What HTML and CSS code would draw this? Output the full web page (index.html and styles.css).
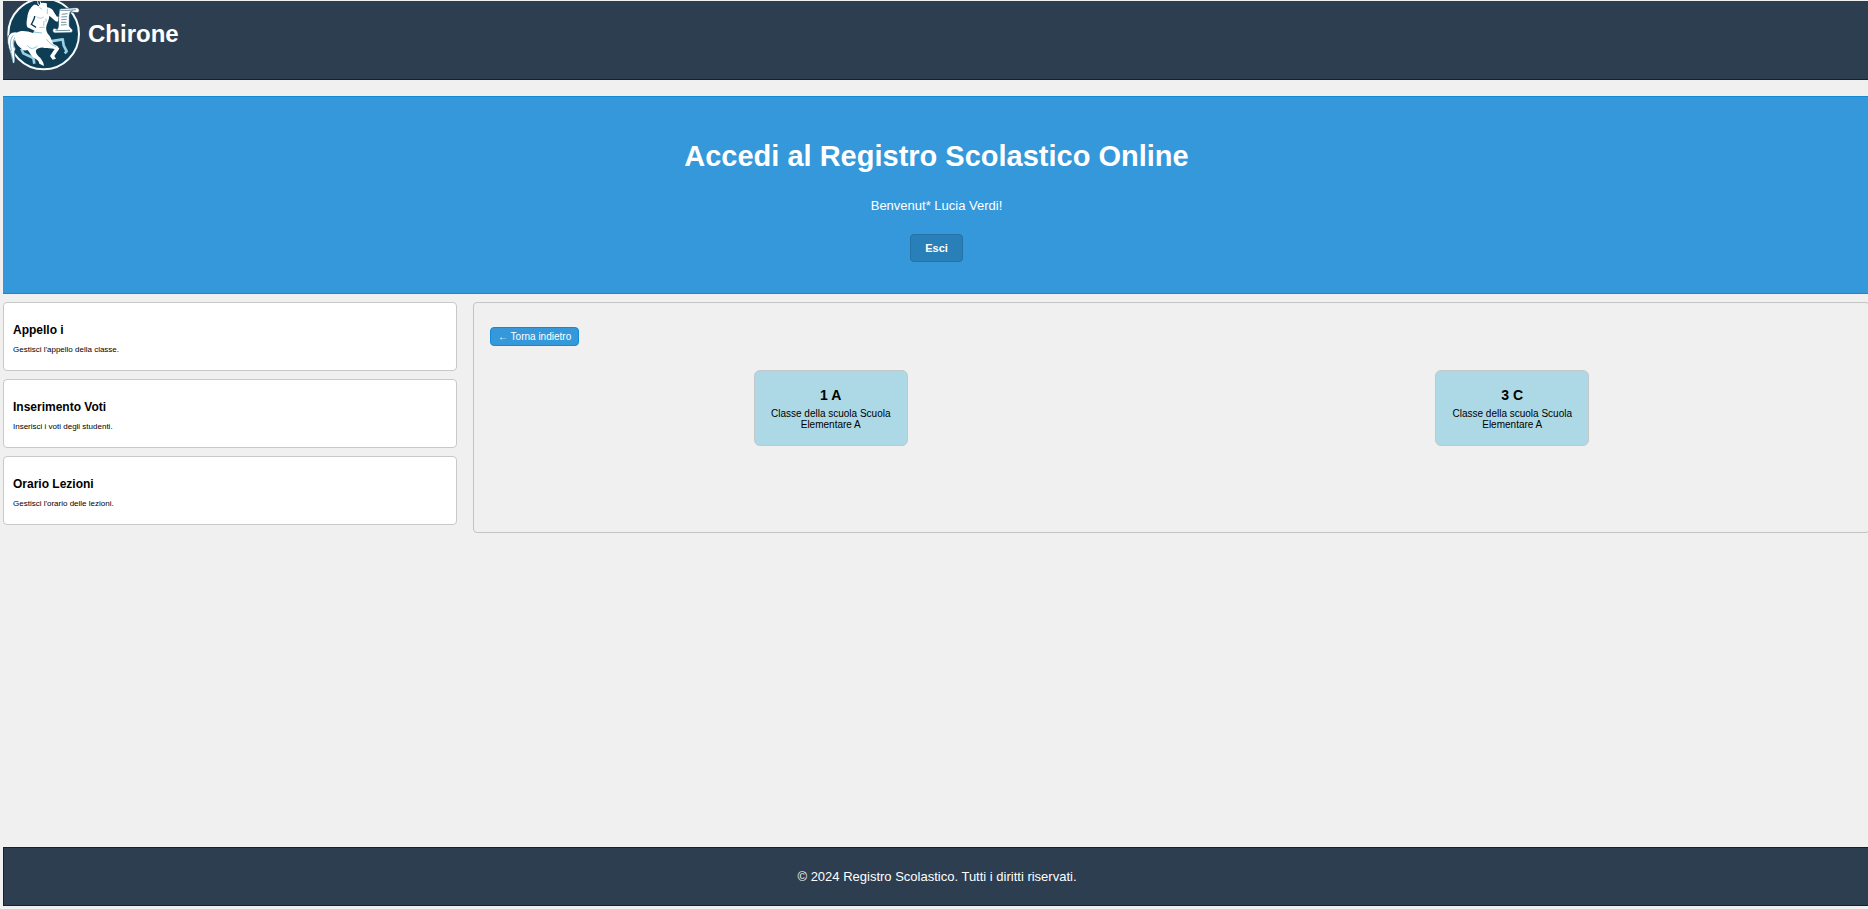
FILE: index.html
```html
<!DOCTYPE html>
<html lang="it">
<head>
<meta charset="utf-8">
<title>Chirone - Registro Scolastico</title>
<link rel="stylesheet" href="styles.css">
</head>
<body>
<header class="topbar">
  <svg class="logo" viewBox="9 3 240 213" role="img" aria-label="Chirone">
    <circle cx="131" cy="102" r="106" fill="#0d3e56" stroke="#f4fbfd" stroke-width="6"/>
    <path d="M56 98C36 90 20 104 23 128C26 148 34 164 38 190L44 189C47 170 40 160 47 146C38 132 42 116 58 112Z" fill="#fff" stroke="#0d3e56" stroke-width="2"/>
    <path d="M40 106C30 118 29 134 35 152M31 150L39 184M47 110C38 120 38 132 43 146" fill="none" stroke="#4f94b3" stroke-width="2"/>
    <path d="M64 146L70 160L100 174L103 191" fill="none" stroke="#9bd0e3" stroke-width="8" stroke-linejoin="round"/>
    <path d="M150 124L188 118L191 136L200 154L194 160" fill="none" stroke="#9bd0e3" stroke-width="8" stroke-linejoin="round"/>
    <path d="M102 14C90 24 84 34 82 52C80 64 78 74 82 82L104 92L99 99C82 93 61 89 50 99C40 110 45 131 61 143C67 149 74 154 82 150C88 154 90 164 98 171C109 178 117 181 118 191L132 198L130 188L122 175C113 168 106 158 108 151C112 145 122 142 130 143C142 146 152 143 164 147L150 168L158 179L168 176L163 168L178 146L172 138L160 132C156 124 154 116 149 108C139 98 136 88 140 75C145 62 148 54 148 47L166 63C172 67 178 64 181 57L184 48L171 50L162 37C158 27 151 23 141 22L140 7L132 3L119 5L114 14Z" fill="#fff"/>
    <path d="M108 3C106 11 109 17 116 19L121 10L127 8L141 10L145 3Z" fill="#0d3e56"/>
    <path d="M113 4C113 10 115 14 119 17M120 4L124 14" fill="none" stroke="#fff" stroke-width="3"/>
    <path d="M104 48C105 56 98 65 94 73L108 82" fill="none" stroke="#0d3e56" stroke-width="4"/>
    <path d="M110 50C118 56 124 56 131 50M132 63L131 78M118 82L134 82M138 56L138 66M118 22L126 28M142 26L142 42" fill="none" stroke="#6fb0cb" stroke-width="2"/>
    <path d="M100 96L126 99M82 136C92 150 102 146 112 138M140 118C148 130 156 134 168 140" fill="none" stroke="#8cc6dc" stroke-width="3"/>
    <path d="M178 29C182 24 192 26 214 24L229 23C239 23 241 36 232 38L211 36L208 49L208 78L214 86C221 88 218 99 210 98L165 99C156 98 156 86 164 85L172 88L175 80L176 52Z" fill="#fff" stroke="#0d3e56" stroke-width="2"/>
    <path d="M185 43L203 41M184 51L201 50M184 59L200 58M183 67L199 67M183 75L200 74M181 31L204 31L228 29M166 92L210 91M209 38L218 31" fill="none" stroke="#2b5b72" stroke-width="2"/>
  </svg>
  <span class="brand">Chirone</span>
</header>
<section class="hero">
  <h1>Accedi al Registro Scolastico Online</h1>
  <p>Benvenut* Lucia Verdi!</p>
  <button type="button" class="logout">Esci</button>
</section>
<main class="content">
  <nav class="menu">
    <article class="card"><h2>Appello i</h2><p>Gestisci l'appello della classe.</p></article>
    <article class="card"><h2>Inserimento Voti</h2><p>Inserisci i voti degli studenti.</p></article>
    <article class="card"><h2>Orario Lezioni</h2><p>Gestisci l'orario delle lezioni.</p></article>
  </nav>
  <section class="panel">
    <button type="button" class="back">← Torna indietro</button>
    <div class="classes">
      <article class="class-card"><h2>1 A</h2><p>Classe della scuola Scuola Elementare A</p></article>
      <article class="class-card"><h2>3 C</h2><p>Classe della scuola Scuola Elementare A</p></article>
    </div>
  </section>
</main>
<footer class="footer"><p>© 2024 Registro Scolastico. Tutti i diritti riservati.</p></footer>
</body>
</html>
```
FILE: styles.css
```css
* { box-sizing: border-box; }
html { overflow-x: hidden; }
body {
  margin: 0 -2px 0 0;
  padding: 1px 0 3px 3px;
  min-height: 100vh;
  display: flex;
  flex-direction: column;
  background: #f0f0f0;
  color: #000;
  font-family: "Liberation Sans", Arial, sans-serif;
  font-size: 13px;
}
h1, h2, p { margin: 0; }
.topbar {
  display: flex;
  align-items: flex-start;
  padding-bottom: 7px;
  background: #2c3e50;
  border-bottom: 1px solid #0c2340;
  color: #fff;
}
.logo { display: block; width: 80px; height: 71px; }
.brand {
  padding: 19px 5px;
  font-size: 24px;
  line-height: 28px;
  font-weight: bold;
}
.hero {
  margin-top: 16px;
  padding: 41px 16px 31px;
  background: #3498db;
  border: solid #118bd6;
  border-width: 1px 0;
  color: #fff;
  text-align: center;
}
.hero h1 { font-size: 29px; line-height: 36px; }
.hero p { margin: 24px 0 20px; line-height: 16px; }
.logout {
  display: inline-block;
  padding: 0 14px;
  height: 28px;
  border: 1px solid #2472a6;
  border-radius: 4px;
  background: #2980b9;
  color: #fff;
  font: bold 11px "Liberation Sans", Arial, sans-serif;
  vertical-align: top;
}
.content {
  display: grid;
  grid-template-columns: 454fr 1397fr;
  gap: 16px;
  margin-top: 8px;
}
.menu { display: flex; flex-direction: column; gap: 8px; padding-bottom: 8px; }
.card {
  padding: 20px 9px 15px;
  background: #fff;
  border: 1px solid #c8c8c8;
  border-radius: 4px;
}
.card h2 { font-size: 12px; line-height: 14px; }
.card p { margin-top: 8px; font-size: 8px; line-height: 10px; }
.panel {
  padding: 24px 16px;
  border: 1px solid #c4c4c4;
  border-radius: 4px;
}
.back {
  display: block;
  padding: 0 7px;
  height: 19px;
  border: 1px solid #118bd6;
  border-radius: 4px;
  background: #3498db;
  color: #fff;
  font: 10px "Liberation Sans", Arial, sans-serif;
}
.classes {
  display: grid;
  grid-template-columns: 1fr 1fr;
  justify-items: center;
  margin-top: 24px;
}
.class-card {
  width: 154px;
  padding: 16px 15px 15px;
  background: #add8e6;
  border: 1px solid #c4c8ca;
  border-radius: 6px;
  text-align: center;
}
.class-card h2 { font-size: 14px; line-height: 16px; }
.class-card p { margin-top: 5px; font-size: 10px; line-height: 11px; }
.footer {
  margin-top: auto;
  padding: 20px;
  background: #2c3e50;
  border: 1px solid #0c2340;
  border-right: 0;
  color: #fff;
  text-align: center;
}
.footer p { line-height: 17px; }
```
